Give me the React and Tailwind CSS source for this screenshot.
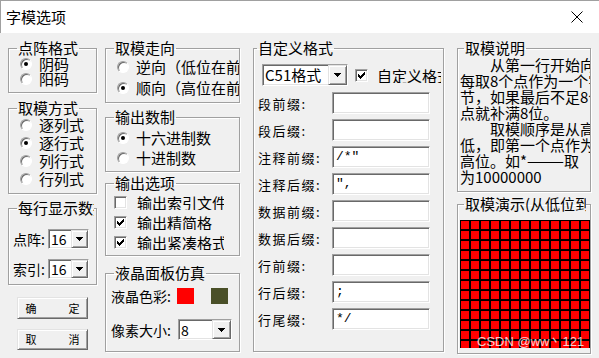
import React from "react";

const F = "font-['Noto_Sans_CJK_SC',sans-serif]";
const sunken =
  "border border-t-[#a0a0a0] border-l-[#a0a0a0] border-r-white border-b-white shadow-[inset_1px_1px_0_#696969,inset_-1px_-1px_0_#e3e3e3]";
const raised =
  "border border-t-[#e3e3e3] border-l-[#e3e3e3] border-r-[#696969] border-b-[#696969] shadow-[inset_1px_1px_0_#fff,inset_-1px_-1px_0_#a0a0a0]";

function Group({ title, className = "", legendClass = "ml-[8px]", children }) {
  return (
    <fieldset
      className={`min-w-0 border border-[#a0a0a0] shadow-[inset_1px_1px_0_#fff,1px_1px_0_#fff] ${className}`}
    >
      <legend
        className={`${legendClass} px-[1px] text-[15px] leading-[16px] whitespace-nowrap overflow-hidden max-w-[calc(100%-10px)]`}
      >
        {title}
      </legend>
      {children}
    </fieldset>
  );
}

function Radio({ checked }) {
  return (
    <span className="flex items-center justify-center w-[12px] h-[12px] shrink-0 rounded-full bg-white border border-[#a0a0a0] border-r-white border-b-white shadow-[inset_1px_1px_0_#696969]">
      {checked && <span className="w-[4px] h-[4px] rounded-full bg-black" />}
    </span>
  );
}

function RadioRow({ checked, label, h }) {
  return (
    <div className={`flex items-center ${h}`}>
      <Radio checked={checked} />
      <span className="ml-[7px] text-[15px] leading-[14px] whitespace-nowrap">{label}</span>
    </div>
  );
}

function Check({ checked }) {
  return (
    <span className={`flex items-center justify-center w-[13px] h-[13px] shrink-0 bg-white ${sunken}`}>
      {checked && (
        <svg width="7" height="7" viewBox="0 0 7 7" shapeRendering="crispEdges">
          <rect x="6" y="0" width="1" height="1" fill="#000" />
          <rect x="5" y="1" width="2" height="1" fill="#000" />
          <rect x="0" y="2" width="1" height="1" fill="#000" />
          <rect x="4" y="2" width="3" height="1" fill="#000" />
          <rect x="0" y="3" width="2" height="1" fill="#000" />
          <rect x="3" y="3" width="3" height="1" fill="#000" />
          <rect x="0" y="4" width="5" height="1" fill="#000" />
          <rect x="1" y="5" width="3" height="1" fill="#000" />
          <rect x="2" y="6" width="1" height="1" fill="#000" />
        </svg>
      )}
    </span>
  );
}

function Arrow() {
  return (
    <svg width="7" height="4" viewBox="0 0 7 4" shapeRendering="crispEdges">
      <path d="M0 0 H7 V1 H6 V2 H5 V3 H4 V4 H3 V3 H2 V2 H1 V1 H0 Z" fill="#000" />
    </svg>
  );
}

function Select({ value, className, btn = "w-[17px]", text = "text-[14px]" }) {
  return (
    <div className={`flex bg-white ${sunken} ${className}`}>
      <span className={`flex-1 flex items-center pl-[2px] ${text} leading-[14px] whitespace-nowrap overflow-hidden`}>
        {value}
      </span>
      <span className={`flex items-center justify-center bg-[#f0f0f0] ${raised} ${btn}`}>
        <Arrow />
      </span>
    </div>
  );
}

function Field({ label, value }) {
  return (
    <div className="flex items-center h-[22px]">
      <span className="w-[74px] text-[13px] leading-[13px] tracking-[1.5px] whitespace-nowrap">{label}</span>
      <span
        className={`w-[98px] h-[22px] bg-white flex items-center pl-[3px] text-[13px] font-['Liberation_Mono',monospace] ${sunken}`}
      >
        {value}
      </span>
    </div>
  );
}

function Btn({ a, b, className }) {
  return (
    <div
      className={`ml-[9px] w-[71px] flex items-center justify-center gap-[32px] bg-[#f0f0f0] text-[11px] leading-[11px] ${raised} ${className}`}
    >
      <span>{a}</span>
      <span>{b}</span>
    </div>
  );
}

const desc = [
  "\u3000\u3000从第一行开始向右",
  "每取8个点作为一个字",
  "节，如果最后不足8个",
  "点就补满8位。",
  "\u3000\u3000取模顺序是从高到",
  "低，即第一个点作为最",
  "高位。如*———取",
  "为10000000",
];

export default function App() {
  const cells = Array.from({ length: 169 });
  return (
    <div className={`${F} relative w-[599px] h-[358px] overflow-hidden bg-[#f0f0f0] text-black`}>
      <div className="h-[33px] bg-white flex items-center justify-between pl-[5px] pr-[16px] border-t border-l border-[#a0a0a0]">
        <span className="text-[15px] leading-[16px]">字模选项</span>
        <svg width="12" height="12" viewBox="0 0 12 12">
          <path d="M0.5 0.5 L11.5 11.5 M11.5 0.5 L0.5 11.5" stroke="#000" strokeWidth="1" />
        </svg>
      </div>

      <div className="flex pl-[8px] pt-[7px]">
        {/* column 1 */}
        <div className="w-[89px] flex flex-col">
          <Group title="点阵格式" className="h-[53px]">
            <div className="pl-[11px] flex flex-col">
              <RadioRow checked label="阴码" h="h-[15px]" />
              <RadioRow label="阳码" h="h-[15px]" />
            </div>
          </Group>
          <Group title="取模方式" className="h-[94px] mt-[7px]">
            <div className="pl-[11px] flex flex-col">
              <RadioRow label="逐列式" h="h-[18px]" />
              <RadioRow checked label="逐行式" h="h-[18px]" />
              <RadioRow label="列行式" h="h-[18px]" />
              <RadioRow label="行列式" h="h-[18px]" />
            </div>
          </Group>
          <Group title="每行显示数据" className="h-[85px] mt-[6px]">
            <div className="pl-[4px] pt-[13px] flex flex-col gap-[10px]">
              <div className="flex items-center h-[20px]">
                <span className="w-[35px] text-[14px] leading-[14px] whitespace-nowrap">点阵:</span>
                <Select value="16" className="w-[41px] h-[20px]" />
              </div>
              <div className="flex items-center h-[20px]">
                <span className="w-[35px] text-[14px] leading-[14px] whitespace-nowrap">索引:</span>
                <Select value="16" className="w-[41px] h-[20px]" />
              </div>
            </div>
          </Group>
          <Btn a="确" b="定" className="mt-[12px] h-[22px]" />
          <Btn a="取" b="消" className="mt-[10px] h-[21px]" />
        </div>

        {/* column 2 */}
        <div className="ml-[8px] w-[135px] flex flex-col">
          <Group title="取模走向" className="h-[63px] overflow-hidden">
            <div className="pl-[11px] flex flex-col">
              <RadioRow label="逆向（低位在前）" h="h-[21px]" />
              <RadioRow checked label="顺向（高位在前）" h="h-[21px]" />
            </div>
          </Group>
          <Group title="输出数制" className="h-[63px] mt-[6px]">
            <div className="pl-[11px] pt-[3px] flex flex-col">
              <RadioRow checked label="十六进制数" h="h-[20px]" />
              <RadioRow label="十进制数" h="h-[20px]" />
            </div>
          </Group>
          <Group title="输出选项" className="h-[81px] mt-[3px]">
            <div className="pl-[8px] pt-[1px] flex flex-col">
              {[
                [false, "输出索引文件"],
                [true, "输出精简格"],
                [true, "输出紧凑格式"],
              ].map(([c, l]) => (
                <div key={l} className="flex items-center h-[20px]">
                  <Check checked={c} />
                  <span className="ml-[10px] w-[87px] overflow-hidden text-[15px] leading-[15px] whitespace-nowrap">
                    {l}
                  </span>
                </div>
              ))}
            </div>
          </Group>
          <Group title="液晶面板仿真" className="h-[87px] mt-[9px]">
            <div className="pl-[5px] pt-[7px] flex flex-col">
              <div className="flex items-center h-[16px]">
                <span className="w-[66px] text-[14px] leading-[14px] whitespace-nowrap">液晶色彩:</span>
                <span className="w-[17px] h-[16px] bg-[#ff0000]" />
                <span className="ml-[17px] w-[17px] h-[16px] bg-[#4a5028]" />
              </div>
              <div className="flex items-center h-[21px] mt-[15px]">
                <span className="w-[67px] text-[14px] leading-[14px] whitespace-nowrap">像素大小:</span>
                <Select value="8" className="w-[54px] h-[21px]" btn="w-[19px]" />
              </div>
            </div>
          </Group>
        </div>

        {/* column 3 */}
        <div className="ml-[13px] w-[191px]">
          <Group title="自定义格式" legendClass="ml-[3px]" className="h-[312px]">
            <div className="pl-[4px] pt-[8px] flex flex-col">
              <div className="flex items-center h-[22px] pl-[4px]">
                <Select value="C51格式" className="w-[86px] h-[22px]" btn="w-[19px]" text="text-[15px]" />
                <span className="ml-[7px]">
                  <Check checked />
                </span>
                <span className="ml-[9px] w-[64px] overflow-hidden text-[15px] leading-[15px] whitespace-nowrap">
                  自定义格式
                </span>
              </div>
              <div className="mt-[6px] flex flex-col gap-[5px]">
                <Field label="段前缀:" value="" />
                <Field label="段后缀:" value="" />
                <Field label="注释前缀:" value={'/*"'} />
                <Field label="注释后缀:" value={'",'} />
                <Field label="数据前缀:" value="" />
                <Field label="数据后缀:" value="" />
                <Field label="行前缀:" value="" />
                <Field label="行后缀:" value=";" />
                <Field label="行尾缀:" value="*/" />
              </div>
            </div>
          </Group>
        </div>

        {/* column 4 */}
        <div className="ml-[13px] w-[134px] flex flex-col">
          <Group title="取模说明" legendClass="ml-[6px]" className="h-[152px] overflow-hidden">
            <div className="pl-[2px] flex flex-col">
              {desc.map((l, i) => (
                <div key={i} className="h-[16px] flex items-center text-[15px] leading-[15px] whitespace-nowrap">
                  {l}
                </div>
              ))}
            </div>
          </Group>
          <Group title="取模演示(从低位到高位)" legendClass="ml-[6px]" className="h-[158px] mt-[4px]">
            <div className="pl-[2px] pt-[8px]">
              <div className="w-[130px] h-[128px] overflow-hidden bg-black">
                <div className="grid grid-cols-[repeat(13,8px)] gap-[2px] p-[1px]">
                  {cells.map((_, i) => (
                    <span key={i} className="w-[8px] h-[8px] bg-[#ff0000]" />
                  ))}
                </div>
              </div>
            </div>
          </Group>
        </div>
      </div>

      <div className="absolute left-[477px] top-[334px] text-[13px] leading-[16px] text-white/80 font-['Liberation_Sans',sans-serif] whitespace-nowrap">
        CSDN @ww丶121
      </div>
    </div>
  );
}
